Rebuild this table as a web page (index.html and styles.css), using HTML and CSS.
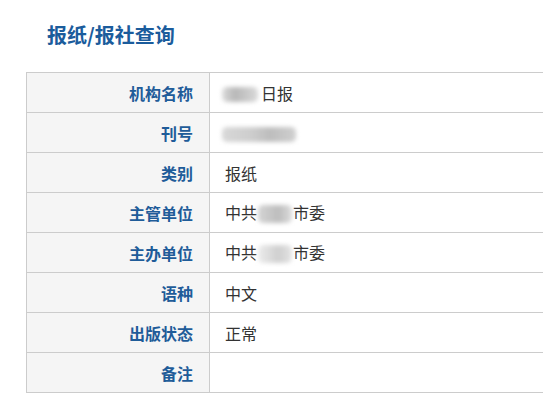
FILE: index.html
```html
<!DOCTYPE html>
<html lang="zh">
<head>
<meta charset="utf-8">
<title>报纸/报社查询</title>
<link rel="stylesheet" href="styles.css">
</head>
<body>
<div class="page">
  <h1 class="title">报纸/报社查询</h1>
  <div class="clip">
    <table class="info">
      <tr><th>机构名称</th><td><span class="blur w38"></span>日报</td></tr>
      <tr><th>刊号</th><td><span class="blur w74"></span></td></tr>
      <tr><th>类别</th><td>报纸</td></tr>
      <tr><th>主管单位</th><td>中共<span class="blur w35"></span>市委</td></tr>
      <tr><th>主办单位</th><td>中共<span class="blur w35 light"></span>市委</td></tr>
      <tr><th>语种</th><td>中文</td></tr>
      <tr><th>出版状态</th><td>正常</td></tr>
      <tr><th>备注</th><td></td></tr>
    </table>
  </div>
</div>
</body>
</html>
```
FILE: styles.css
```css
html, body {
  margin: 0;
  padding: 0;
  background: #fff;
  overflow: hidden;
}
.page {
  font-family: "Noto Sans CJK SC", "Microsoft YaHei", sans-serif;
  padding-top: 21px;
}
.title {
  margin: 0 0 23px 47px;
  font-size: 20px;
  line-height: 28px;
  font-weight: bold;
  color: #1b5c9c;
}
.clip {
  overflow: hidden;
  padding-left: 26px;
}
.info {
  border-collapse: collapse;
  width: 640px;
  border: 1px solid #cccccc;
}
.info th, .info td {
  border: 1px solid #cccccc;
  height: 39px;
  padding: 0;
  font-size: 16px;
  line-height: 20px;
}
.info th {
  width: 166px;
  background: #f5f5f5;
  color: #1f5c99;
  text-align: right;
  padding-right: 16px;
  font-weight: bold;
}
.info td {
  text-align: left;
  padding-left: 15px;
  color: #333;
}
.blur {
  display: inline-block;
  height: 15px;
  vertical-align: -2px;
  background: linear-gradient(90deg, #dcdcdc 0%, #b8b8b8 35%, #c4c4c4 60%, #dadada 100%);
  filter: blur(2px);
  border-radius: 5px;
}
.w38 { width: 36px; margin-left: -3px; margin-right: 3px; }
.w74 { width: 74px; margin-left: -3px; background: linear-gradient(90deg, #d8d8d8, #cdcdcd 40%, #bdbdbd 65%, #d0d0d0); }
.w35 { width: 34px; margin: 0 1px; background: linear-gradient(90deg, #d4d4d4, #bdbdbd 60%, #dcdcdc); height: 18px; vertical-align: -4px; }
.light { background: linear-gradient(90deg, #ececec, #cfcfcf 60%, #e4e4e4); }
```
